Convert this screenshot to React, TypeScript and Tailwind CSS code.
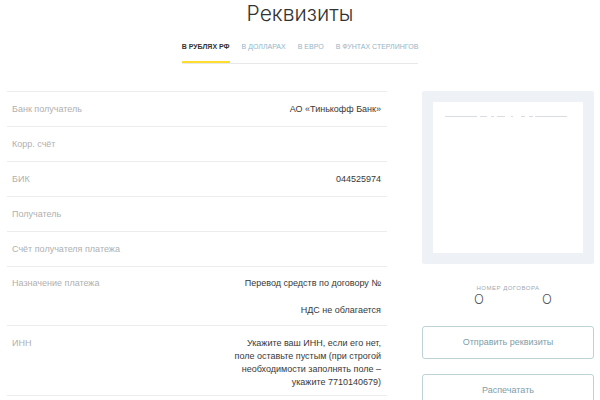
import React from "react";

const tabs = ["В рублях РФ", "В долларах", "В евро", "В фунтах стерлингов"];

function Row({ label, children, className = "" }: { label: string; children?: React.ReactNode; className?: string }) {
  return (
    <div className={`flex justify-between border-b border-[#ececec] pl-[5px] pr-[6px] ${className}`}>
      <div className="text-[9px] leading-[13px] text-[#b0b0b0]">{label}</div>
      <div className="text-right text-[9px] leading-[13px] text-[#383838]">{children}</div>
    </div>
  );
}

export default function App() {
  return (
    <div className="w-[600px] h-[400px] overflow-hidden bg-white font-['Liberation_Sans',Arial,sans-serif]">
      <h1 className="text-center font-['Inter',sans-serif] text-[21px] font-light leading-[28px] text-[#333]">
        Реквизиты
      </h1>
      <div className="mt-[14px] flex justify-center">
        <div className="flex gap-[12px] border-b border-[#e8e8e8]">
          {tabs.map((t, i) => (
            <div
              key={t}
              className={`pb-[9px] text-[7px] leading-[10px] uppercase ${
                i === 0
                  ? "border-b-2 border-[#ffdd2d] font-bold text-[#333]"
                  : "border-b-2 border-transparent text-[#94b6c8]"
              }`}
            >
              {t}
            </div>
          ))}
        </div>
      </div>

      <div className="mt-[27px] flex">
        <div className="ml-[7px] w-[380px] border-t border-[#ececec]">
          <Row label="Банк получатель" className="h-[35px] items-center">
            АО «Тинькофф Банк»
          </Row>
          <Row label="Корр. счёт" className="h-[35px] items-center" />
          <Row label="БИК" className="h-[35px] items-center">
            044525974
          </Row>
          <Row label="Получатель" className="h-[35px] items-center" />
          <Row label="Счёт получателя платежа" className="h-[35px] items-center" />
          <Row label="Назначение платежа" className="h-[59px] pt-[10px]">
            <div>Перевод средств по договору №</div>
            <div className="mt-[14px]">НДС не облагается</div>
          </Row>
          <Row label="ИНН" className="h-[70px] pt-[11px]">
            Укажите ваш ИНН, если его нет,
            <br />
            поле оставьте пустым (при строгой
            <br />
            необходимости заполнять поле –
            <br />
            укажите 7710140679)
          </Row>
        </div>

        <div className="ml-[35px] w-[172px]">
          <div className="h-[173px] rounded-[2px] bg-[#eef2f6] p-[11px]">
            <div className="h-full w-full bg-white pt-[13px]">
              <svg width="150" height="3" viewBox="0 0 150 3" className="block">
                <g stroke="#d9dde2" strokeWidth="1">
                  <line x1="12" y1="1.5" x2="44" y2="1.5" />
                  <line x1="47" y1="1.5" x2="54" y2="1.5" />
                  <line x1="58" y1="1.5" x2="61" y2="1.5" />
                  <line x1="64" y1="1.5" x2="72" y2="1.5" />
                  <line x1="78" y1="1.5" x2="80" y2="1.5" />
                  <line x1="88" y1="1.5" x2="92" y2="1.5" />
                  <line x1="96" y1="1.5" x2="100" y2="1.5" />
                  <line x1="102" y1="1.5" x2="134" y2="1.5" />
                </g>
              </svg>
            </div>
          </div>
          <div className="mt-[20px] text-center text-[6px] leading-[8px] uppercase tracking-[0.5px] text-[#a3aab0]">
            Номер договора
          </div>
          <div className="flex pl-[52px] gap-[58px] font-['Inter',sans-serif] text-[13px] font-light leading-[14px] text-[#555]">
            <span>O</span>
            <span>O</span>
          </div>
          <button className="mt-[20px] flex h-[33px] w-full items-center justify-center rounded-[3px] border border-[#bcd2d8] text-[9px] text-[#7d9eaa]">
            Отправить реквизиты
          </button>
          <button className="mt-[15px] flex h-[33px] w-full items-center justify-center rounded-[3px] border border-[#bcd2d8] text-[9px] text-[#7d9eaa]">
            Распечатать
          </button>
        </div>
      </div>
    </div>
  );
}
